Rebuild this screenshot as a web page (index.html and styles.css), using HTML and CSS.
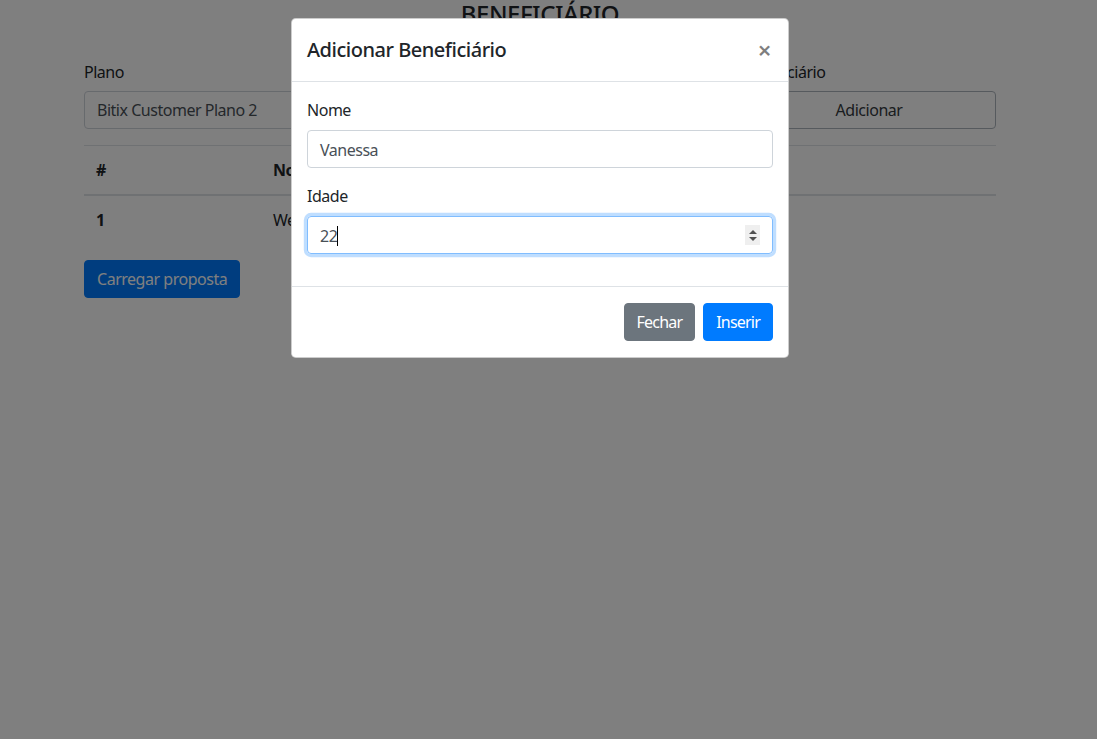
FILE: index.html
```html
<!DOCTYPE html>
<html lang="pt-BR">
<head>
<meta charset="utf-8">
<title>Beneficiário</title>
<link rel="stylesheet" href="styles.css">
</head>
<body>
<div class="page">
  <h4 class="title">BENEFICIÁRIO</h4>
  <div class="form-row">
    <div class="col">
      <label class="lbl">Plano</label>
      <div class="control">Bitix Customer Plano 2</div>
    </div>
    <div class="col">
      <label class="lbl">Nome</label>
      <div class="control"></div>
    </div>
    <div class="col">
      <label class="lbl">Beneficiário</label>
      <div class="btn-add">Adicionar</div>
    </div>
  </div>
  <table class="table">
    <thead>
      <tr><th class="c1">#</th><th class="c2">Nome</th><th>Idade</th></tr>
    </thead>
    <tbody>
      <tr><th class="c1">1</th><td>Wesley</td><td>28</td></tr>
    </tbody>
  </table>
  <div class="btn btn-primary">Carregar proposta</div>
</div>

<div class="backdrop"></div>

<div class="modal">
  <div class="modal-header">
    <h5 class="modal-title">Adicionar Beneficiário</h5>
    <span class="close">&times;</span>
  </div>
  <div class="modal-body">
    <div class="group">
      <label class="lbl">Nome</label>
      <div class="input">Vanessa</div>
    </div>
    <div class="group">
      <label class="lbl">Idade</label>
      <div class="input focus">22<span class="caret"></span>
        <span class="spin"><span class="up"></span><span class="down"></span></span>
      </div>
    </div>
  </div>
  <div class="modal-footer">
    <div class="btn btn-secondary">Fechar</div>
    <div class="btn btn-primary">Inserir</div>
  </div>
</div>
</body>
</html>
```
FILE: styles.css
```css
* { box-sizing: border-box; }
html, body { margin: 0; padding: 0; }
body {
  font-family: "Noto Sans", "Open Sans", sans-serif;
  font-size: 16px;
  line-height: 1.5;
  letter-spacing: -0.03em;
  color: #212529;
  background: #fff;
  width: 1097px;
  height: 739px;
  overflow: hidden;
  position: relative;
}
.page {
  width: 912px;
  margin-left: 84px;
}
.title {
  margin: 0 0 31px;
  font-size: 24px;
  font-weight: 500;
  line-height: 1.2;
  text-align: center;
}
.form-row {
  display: grid;
  grid-template-columns: 1fr 1fr 254px;
  column-gap: 10px;
  margin-bottom: 16px;
}
.lbl {
  display: block;
  margin-bottom: 8px;
}
.page .lbl { margin-bottom: 7px; }
.control {
  height: 38px;
  border: 1px solid #ced4da;
  border-radius: 4px;
  padding: 6px 12px;
  color: #495057;
}
.btn-add {
  height: 38px;
  border: 1px solid #adb5bd;
  border-radius: 4px;
  padding: 6px 12px;
  color: #343a40;
  text-align: center;
}
.table {
  width: 100%;
  border-collapse: collapse;
  margin-bottom: 16px;
}
.table th, .table td {
  padding: 12px;
  text-align: left;
  border-top: 1px solid #dee2e6;
  vertical-align: top;
}
.table thead th {
  border-bottom: 2px solid #dee2e6;
  font-weight: 700;
}
.table .c1 { width: 177px; }
.table .c2 { width: 260px; }
.btn {
  display: inline-block;
  height: 38px;
  padding: 6px 12px;
  border: 1px solid transparent;
  border-radius: 4px;
  font-size: 16px;
  line-height: 24px;
  color: #fff;
}
.modal-footer .btn { letter-spacing: -0.05em; }
.btn-primary { background: #007bff; border-color: #007bff; }
.btn-secondary { background: #6c757d; border-color: #6c757d; }

.backdrop {
  position: absolute;
  inset: 0;
  background: rgba(0, 0, 0, 0.5);
}
.modal {
  position: absolute;
  left: 291px;
  top: 18px;
  width: 498px;
  background: #fff;
  border: 1px solid rgba(0, 0, 0, 0.2);
  border-radius: 4.8px;
}
.modal-header {
  display: flex;
  align-items: flex-start;
  justify-content: space-between;
  padding: 16px 15px;
  border-bottom: 1px solid #dee2e6;
}
.modal-title {
  margin: 0;
  font-size: 20px;
  font-weight: 500;
  line-height: 1.5;
}
.close {
  font-size: 24px;
  font-weight: 600;
  line-height: 30px;
  color: #000;
  opacity: 0.5;
  margin-right: 2px;
}
.modal-body {
  padding: 16px 15px;
}
.group { margin-bottom: 16px; }
.input {
  position: relative;
  height: 38px;
  border: 1px solid #ced4da;
  border-radius: 4px;
  padding: 7px 12px 5px;
  color: #495057;
}
.input.focus {
  border-color: #80bdff;
  box-shadow: 0 0 0 3.2px rgba(0, 123, 255, 0.25);
}
.caret {
  display: inline-block;
  width: 1px;
  height: 20px;
  background: #000;
  vertical-align: -4px;
}
.spin {
  position: absolute;
  right: 12px;
  top: 8px;
  width: 15px;
  height: 20px;
  background: #efefef;
  display: flex;
  flex-direction: column;
  align-items: center;
  justify-content: center;
  gap: 3px;
}
.up {
  width: 0; height: 0;
  border-left: 4px solid transparent;
  border-right: 4px solid transparent;
  border-bottom: 4px solid #505050;
}
.down {
  width: 0; height: 0;
  border-left: 4px solid transparent;
  border-right: 4px solid transparent;
  border-top: 4px solid #505050;
}
.modal-footer {
  display: flex;
  justify-content: flex-end;
  gap: 8px;
  padding: 16px 15px;
  border-top: 1px solid #dee2e6;
}
```
